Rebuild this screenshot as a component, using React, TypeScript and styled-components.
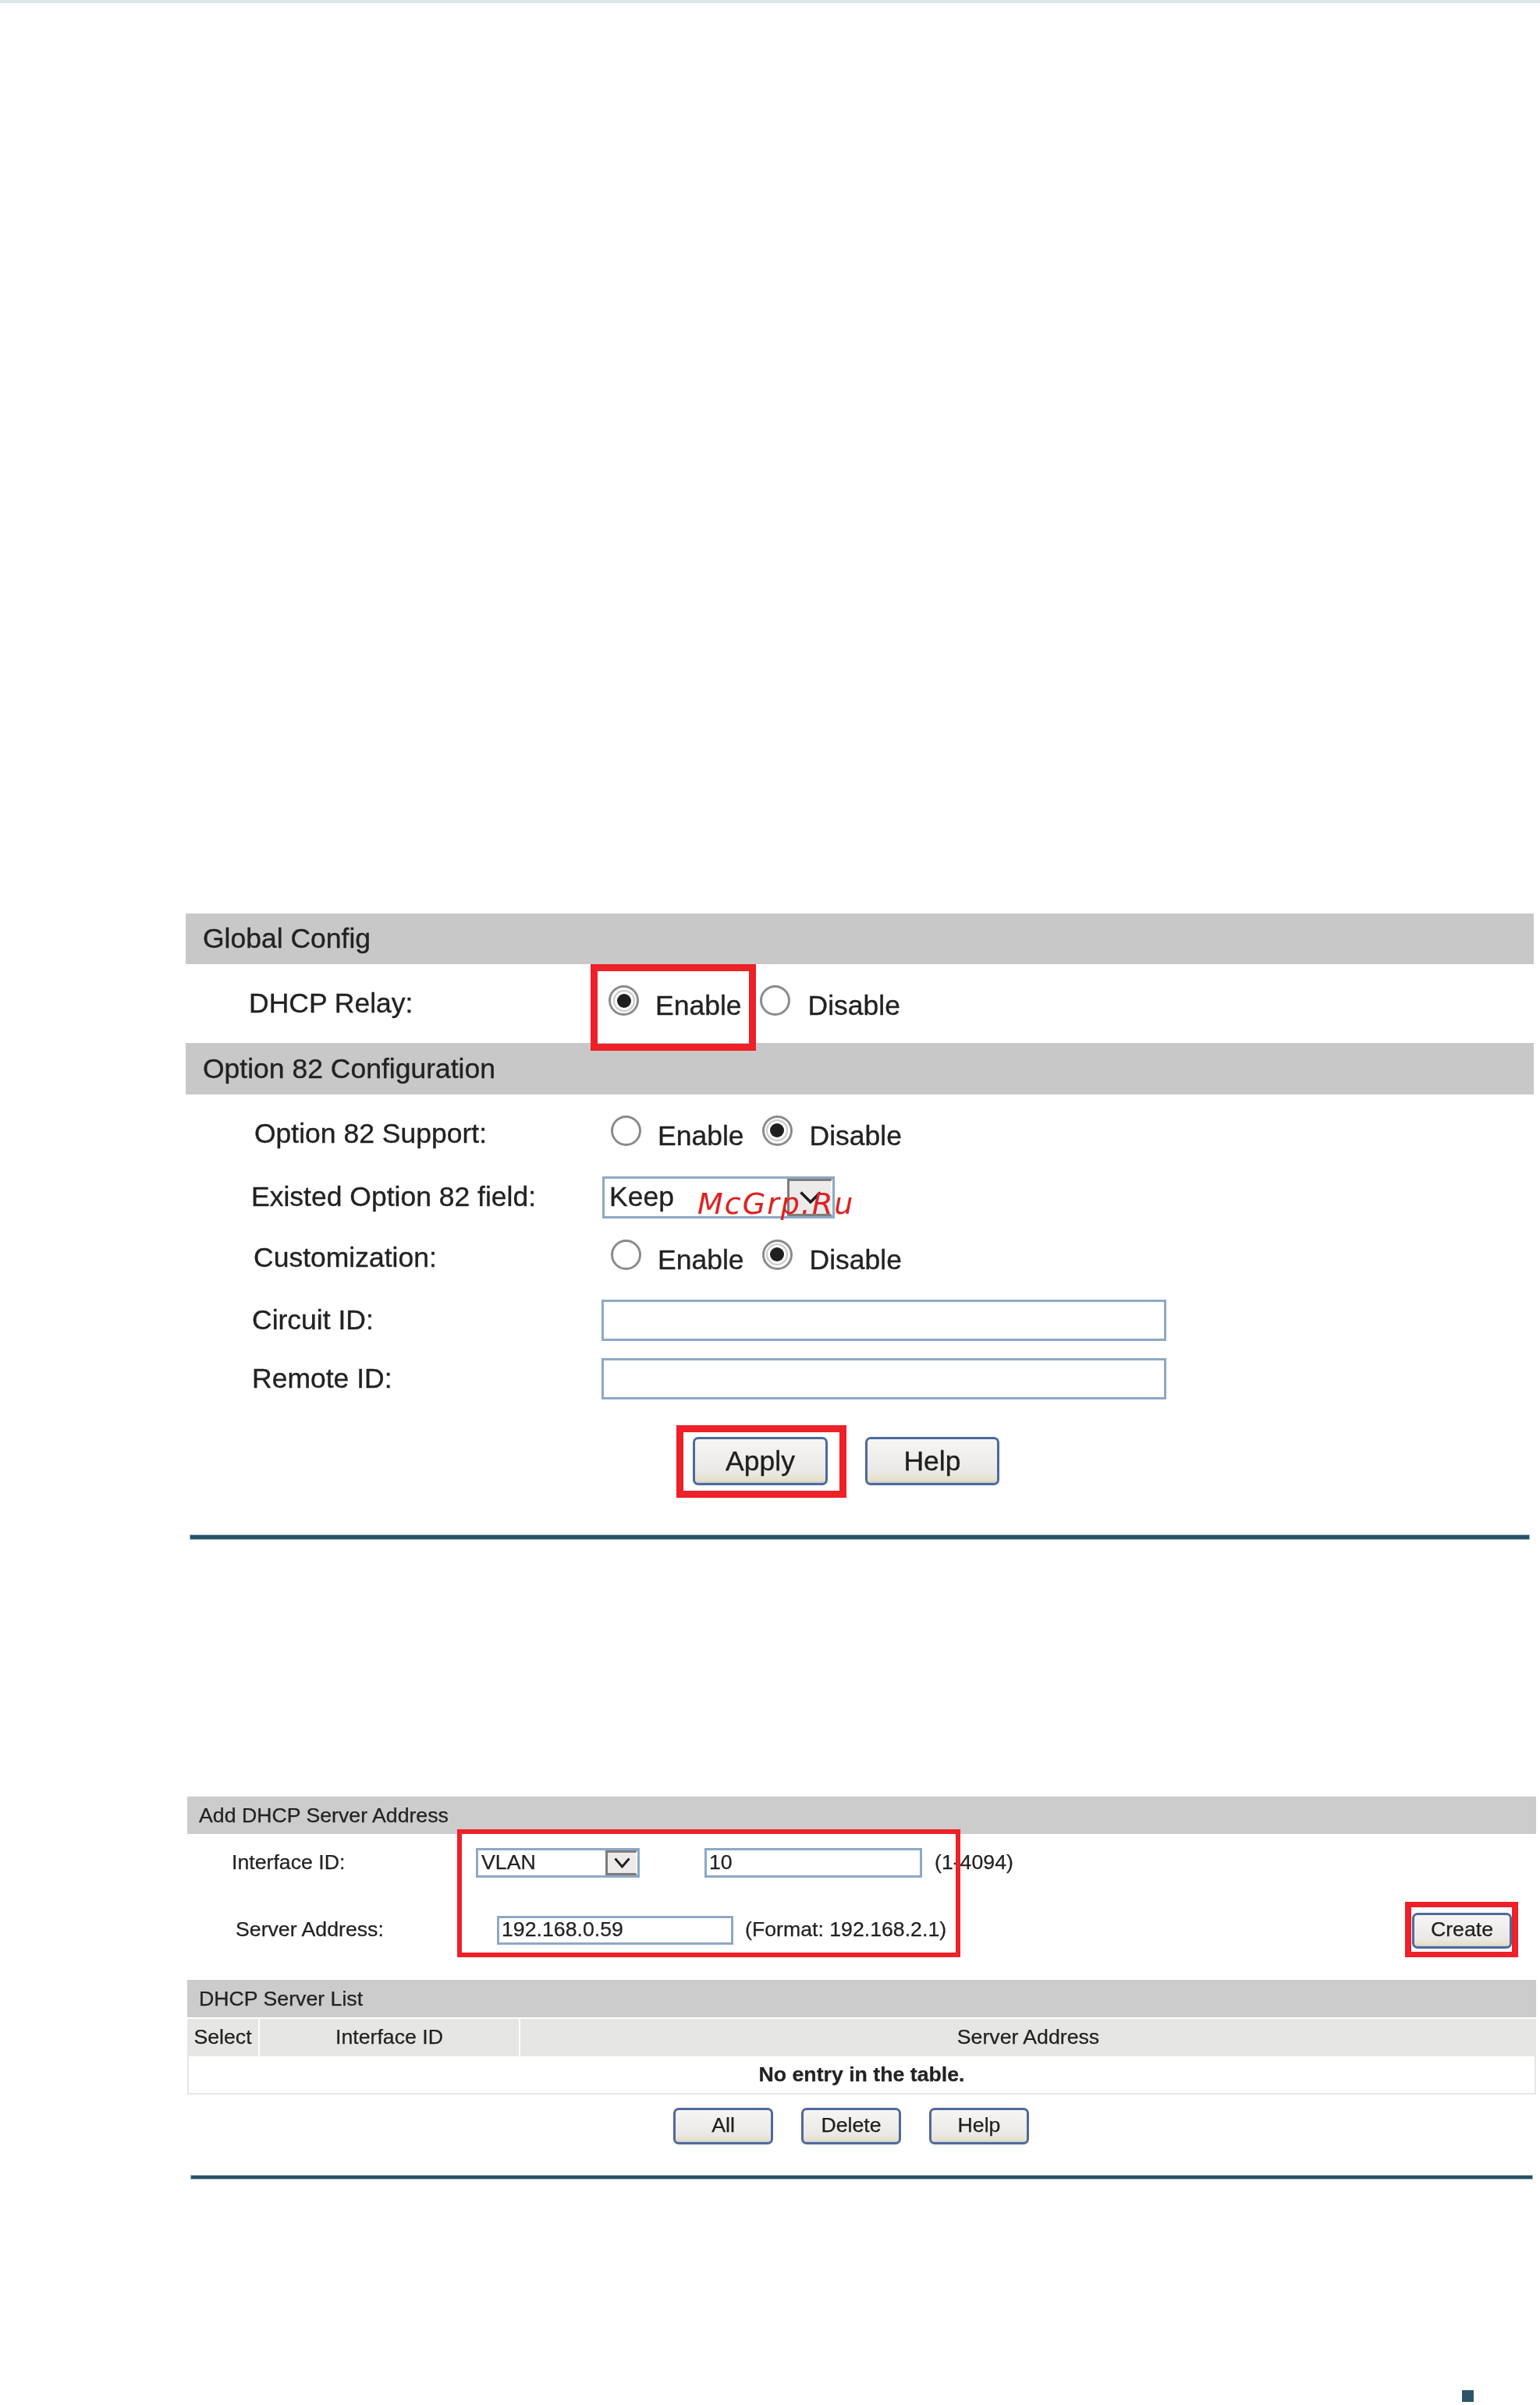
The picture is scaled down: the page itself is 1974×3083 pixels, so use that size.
import React from "react";
import styled, { createGlobalStyle } from "styled-components";

const Global = createGlobalStyle`
  html, body { margin: 0; padding: 0; background: #fff; }
  * { box-sizing: border-box; }
`;

const Page = styled.div`
  position: relative;
  width: 1974px;
  height: 3083px;
  display: flex;
  flex-direction: column;
  background: #fff;
  font-family: "Liberation Sans", Arial, sans-serif;
  color: #222;
  overflow: hidden;
`;

const TopBand = styled.div`
  height: 4px;
  flex: none;
  background: #dce6eb;
`;

const Section = styled.section<{ $top: number; $left: number; $w: number; $fs: number; $blur: number; $stroke: number; $lift: number }>`
  --lift: ${(p) => p.$lift}px;
  position: relative;
  flex: none;
  width: ${(p) => p.$w}px;
  margin-top: ${(p) => p.$top}px;
  margin-left: ${(p) => p.$left}px;
  font-size: ${(p) => p.$fs}px;
  filter: blur(${(p) => p.$blur}px);
  -webkit-text-stroke: ${(p) => p.$stroke}px currentColor;
  white-space: nowrap;
`;

const Bar = styled.div<{ $h: number; $pad: number; $bg: string; $mt?: number }>`
  height: ${(p) => p.$h}px;
  margin-top: ${(p) => p.$mt ?? 0}px;
  padding-left: ${(p) => p.$pad}px;
  display: flex;
  align-items: center;
  background: ${(p) => p.$bg};
`;

const Row = styled.div<{ $h: number; $col: number }>`
  height: ${(p) => p.$h}px;
  display: grid;
  grid-template-columns: ${(p) => p.$col}px 1fr;
  align-items: center;
`;

const Label = styled.div<{ $indent: number }>`
  padding-left: ${(p) => p.$indent}px;
  padding-bottom: var(--lift);
`;

const Controls = styled.div<{ $ml?: number }>`
  display: flex;
  align-items: center;
  align-self: stretch;
  margin-left: ${(p) => p.$ml ?? 0}px;
`;

const RadioGroup = styled.div`
  position: relative;
  display: flex;
  align-items: center;
  align-self: stretch;
`;

const Radio = styled.span<{ $on?: boolean; $ml?: number }>`
  flex: none;
  width: 39px;
  height: 39px;
  margin-left: ${(p) => p.$ml ?? 0}px;
  margin-bottom: 8px;
  border-radius: 50%;
  border: 3px solid #8b8b8b;
  background: #fff;
  display: flex;
  align-items: center;
  justify-content: center;
  &::after {
    content: "";
    display: ${(p) => (p.$on ? "block" : "none")};
    width: 18px;
    height: 18px;
    border-radius: 50%;
    background: #1f1f1f;
    box-shadow: 0 0 0 3px #fff, 0 0 0 5px #c9c9c9;
  }
`;

const RadioText = styled.span<{ $gap: number }>`
  margin-left: ${(p) => p.$gap}px;
  margin-top: 6px;
`;

const Field = styled.input<{ $w: number; $h: number; $ml?: number }>`
  display: block;
  width: ${(p) => p.$w}px;
  height: ${(p) => p.$h}px;
  margin: 0 0 0 ${(p) => p.$ml ?? 0}px;
  padding: 0 0 var(--lift) 3px;
  border: 3px solid #8ea8c6;
  border-radius: 0;
  outline: none;
  background: #fff;
  color: #222;
  font: inherit;
  -webkit-text-stroke: inherit;
`;

const SelectBox = styled.div<{ $w: number; $h: number; $ml?: number; $pad: number }>`
  display: flex;
  align-items: center;
  justify-content: space-between;
  width: ${(p) => p.$w}px;
  height: ${(p) => p.$h}px;
  margin-left: ${(p) => p.$ml ?? 0}px;
  padding-left: ${(p) => p.$pad}px;
  border: 3px solid #8ea8c6;
  background: #fff;
`;

const SelectText = styled.span`
  padding-bottom: var(--lift);
`;

const ArrowButton = styled.span<{ $w: number }>`
  flex: none;
  width: ${(p) => p.$w}px;
  height: 100%;
  display: flex;
  align-items: center;
  justify-content: center;
  background: #ecebe9;
  border-top: 3px solid #7d7d7d;
  border-left: 3px solid #7d7d7d;
  border-bottom: 3px solid #7d7d7d;
  border-right: 2px solid #fff;
`;

const Hint = styled.span<{ $ml: number }>`
  margin-left: ${(p) => p.$ml}px;
  padding-bottom: var(--lift);
`;

const ButtonRow = styled.div<{ $h: number; $pad: number; $gap: number; $mt?: number }>`
  display: flex;
  align-items: center;
  height: ${(p) => p.$h}px;
  margin-top: ${(p) => p.$mt ?? 0}px;
  padding-left: ${(p) => p.$pad}px;
  gap: ${(p) => p.$gap}px;
`;

const Btn = styled.button<{ $w: number; $h: number }>`
  position: relative;
  flex: none;
  width: ${(p) => p.$w}px;
  height: ${(p) => p.$h}px;
  padding: 0 0 var(--lift) 0;
  border: 3px solid #4c6a9c;
  border-radius: 7px;
  background: linear-gradient(#f6f5f4 0%, #efeeed 45%, #e9e8e6 78%, #e9e4cf 86%, #e4e0cc 94%, #c6cad3 100%);
  color: #1e1e1e;
  font: inherit;
  -webkit-text-stroke: inherit;
`;

const Anchor = styled.div`
  position: relative;
  display: flex;
  align-items: center;
`;

const Highlight = styled.div<{ $inset: string; $bw: string; $height?: number }>`
  position: absolute;
  inset: ${(p) => p.$inset};
  height: ${(p) => (p.$height ? `${p.$height}px` : "auto")};
  border-style: solid;
  border-color: #ee2028;
  border-width: ${(p) => p.$bw};
  z-index: 2;
  pointer-events: none;
`;

const Rule = styled.div<{ $ml: number; $w: number; $mt: number; $h: number }>`
  margin-top: ${(p) => p.$mt}px;
  margin-left: ${(p) => p.$ml}px;
  width: ${(p) => p.$w}px;
  height: ${(p) => p.$h}px;
  border: 1px solid #a9bbc6;
  background: #285166;
`;

const PushRight = styled.div<{ $right: number }>`
  margin-left: auto;
  margin-right: ${(p) => p.$right}px;
`;

const TableHead = styled.div`
  display: grid;
  grid-template-columns: 91px 332px 1fr;
  column-gap: 2px;
  height: 48px;
  margin-top: 2px;
`;

const HeadCell = styled.div`
  display: flex;
  align-items: center;
  justify-content: center;
  padding-bottom: var(--lift);
  background: #e6e6e5;
`;

const TableBody = styled.div`
  display: flex;
  align-items: center;
  justify-content: center;
  height: 49px;
  border: 2px solid #e6e6e5;
  border-top: none;
  font-weight: 700;
`;

const Watermark = styled.div`
  position: absolute;
  left: 894px;
  top: 1518px;
  z-index: 5;
  font-family: "DejaVu Sans", sans-serif;
  font-style: italic;
  font-size: 38px;
  line-height: 50px;
  letter-spacing: 2px;
  color: #dc2222;
  white-space: nowrap;
`;

const FootMark = styled.div`
  flex: none;
  width: 15px;
  height: 15px;
  margin-top: auto;
  margin-bottom: 4px;
  margin-left: 1874px;
  background: #2c5468;
`;

const Chevron = ({ w, h, sw }: { w: number; h: number; sw: number }) => (
  <svg width={w} height={h} viewBox={`0 0 ${w} ${h}`} fill="none">
    <path d={`M1.5 1.5 L${w / 2} ${h - 2} L${w - 1.5} 1.5`} stroke="#1c1c1c" strokeWidth={sw} />
  </svg>
);

const RadioPair = ({ on }: { on: "enable" | "disable" }) => (
  <>
    <Radio $on={on === "enable"} />
    <RadioText $gap={21}>Enable</RadioText>
    <Radio $on={on === "disable"} $ml={23} />
    <RadioText $gap={22}>Disable</RadioText>
  </>
);

export default function App() {
  return (
    <Page>
      <Global />
      <TopBand />

      <Section $top={1167} $left={238} $w={1728} $fs={35.5} $blur={0.75} $stroke={0.35} $lift={0}>
        <Bar $h={65} $pad={22} $bg="#c8c8c8">Global Config</Bar>
        <Row $h={101} $col={533}>
          <Label $indent={81}>DHCP Relay:</Label>
          <Controls $ml={9}>
            <RadioGroup>
              <Highlight $inset="0 -18px -10px -23px" $bw="9px" />
              <Radio $on />
              <RadioText $gap={21}>Enable</RadioText>
            </RadioGroup>
            <Radio $ml={23} />
            <RadioText $gap={23}>Disable</RadioText>
          </Controls>
        </Row>
        <Bar $h={66} $pad={22} $bg="#c8c8c8">Option 82 Configuration</Bar>
        <Row $h={100} $col={533}>
          <Label $indent={88}>Option 82 Support:</Label>
          <Controls $ml={12}>
            <RadioPair on="disable" />
          </Controls>
        </Row>
        <Row $h={63} $col={533}>
          <Label $indent={84}>Existed Option 82 field:</Label>
          <SelectBox $w={298} $h={54} $ml={1} $pad={6}>
            <SelectText>Keep</SelectText>
            <ArrowButton $w={58}>
              <Chevron w={28} h={16} sw={3.5} />
            </ArrowButton>
          </SelectBox>
        </Row>
        <Row $h={92} $col={533}>
          <Label $indent={87}>Customization:</Label>
          <Controls $ml={12}>
            <RadioPair on="disable" />
          </Controls>
        </Row>
        <Row $h={69} $col={533}>
          <Label $indent={85}>Circuit ID:</Label>
          <Field readOnly value="" $w={724} $h={53} />
        </Row>
        <Row $h={81} $col={533}>
          <Label $indent={85}>Remote ID:</Label>
          <Field readOnly value="" $w={724} $h={53} />
        </Row>
        <ButtonRow $h={130} $pad={650} $gap={48}>
          <Anchor>
            <Highlight $inset="-15px -24px -16px -21px" $bw="9px" />
            <Btn $w={173} $h={62}>Apply</Btn>
          </Anchor>
          <Btn $w={172} $h={62}>Help</Btn>
        </ButtonRow>
        <Rule $ml={5} $w={1718} $mt={29} $h={7} />
      </Section>

      <Section $top={329} $left={240} $w={1729} $fs={26.7} $blur={0.65} $stroke={0.25} $lift={2}>
        <Highlight $inset="42px 738px auto 346px" $bw="6px" $height={164} />
        <Bar $h={48} $pad={15} $bg="#cccccc">Add DHCP Server Address</Bar>
        <Row $h={74} $col={370}>
          <Label $indent={57}>Interface ID:</Label>
          <Controls>
            <SelectBox $w={210} $h={38} $pad={4}>
              <SelectText>VLAN</SelectText>
              <ArrowButton $w={41}>
                <Chevron w={21} h={14} sw={2.8} />
              </ArrowButton>
            </SelectBox>
            <Field readOnly value="10" $w={279} $h={38} $ml={83} />
            <Hint $ml={16}>(1-4094)</Hint>
          </Controls>
        </Row>
        <Row $h={99} $col={370}>
          <Label $indent={62}>Server Address:</Label>
          <Controls>
            <Field readOnly value="192.168.0.59" $w={303} $h={37} $ml={27} />
            <Hint $ml={15}>(Format: 192.168.2.1)</Hint>
            <PushRight $right={31}>
              <Anchor>
                <Highlight $inset="-14px -8px -11px -9px" $bw="7px 8px" />
                <Btn $w={128} $h={46}>Create</Btn>
              </Anchor>
            </PushRight>
          </Controls>
        </Row>
        <Bar $h={48} $pad={15} $bg="#cccccc" $mt={14}>DHCP Server List</Bar>
        <TableHead>
          <HeadCell>Select</HeadCell>
          <HeadCell>Interface ID</HeadCell>
          <HeadCell>Server Address</HeadCell>
        </TableHead>
        <TableBody>No entry in the table.</TableBody>
        <ButtonRow $h={47} $mt={17} $pad={623} $gap={36}>
          <Btn $w={128} $h={47}>All</Btn>
          <Btn $w={128} $h={47}>Delete</Btn>
          <Btn $w={128} $h={47}>Help</Btn>
        </ButtonRow>
        <Rule $ml={4} $w={1721} $mt={39} $h={6} />
      </Section>

      <Watermark>McGrp.Ru</Watermark>
      <FootMark />
    </Page>
  );
}
